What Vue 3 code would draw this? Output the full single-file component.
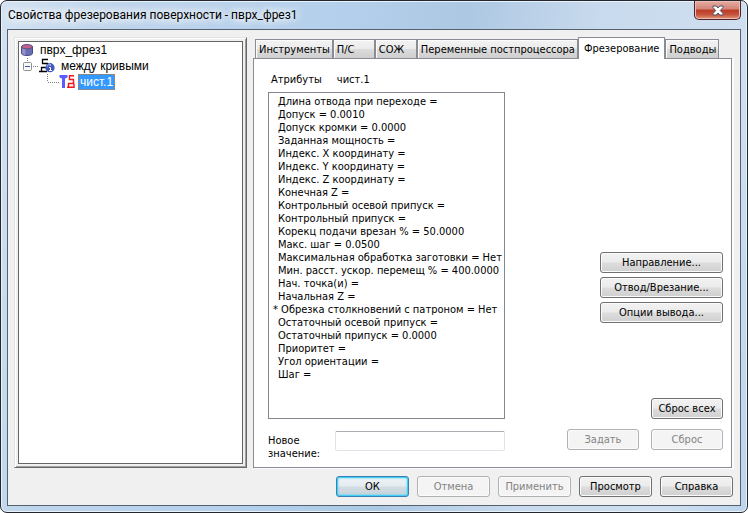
<script setup>
import { ref } from 'vue'

const tabs = ['Инструменты', 'П/С', 'СОЖ', 'Переменные постпроцессора', 'Фрезерование', 'Подводы']
const activeTab = ref('Фрезерование')
const newValue = ref('')
const attributes = [
  'Длина отвода при переходе =',
  'Допуск = 0.0010',
  'Допуск кромки = 0.0000',
  'Заданная мощность =',
  'Индекс. X координату =',
  'Индекс. Y координату =',
  'Индекс. Z координату =',
  'Конечная Z =',
  'Контрольный осевой припуск =',
  'Контрольный припуск =',
  'Корекц подачи врезан % = 50.0000',
  'Макс. шаг = 0.0500',
  'Максимальная обработка заготовки = Нет',
  'Мин. расст. ускор. перемещ % = 400.0000',
  'Нач. точка(и) =',
  'Начальная Z =',
  '* Обрезка столкновений с патроном = Нет',
  'Остаточный осевой припуск =',
  'Остаточный припуск = 0.0000',
  'Приоритет =',
  'Угол ориентации =',
  'Шаг ='
]
const footer = [
  { label: 'ОК', kind: 'primary' },
  { label: 'Отмена', disabled: true },
  { label: 'Применить', disabled: true },
  { label: 'Просмотр' },
  { label: 'Справка' }
]
</script>

<template>
  <div class="window">
    <header class="titlebar">
      <h1 class="title">Свойства фрезерования поверхности - пврх_фрез1</h1>
      <button class="close" type="button" aria-label="Закрыть">
        <svg width="12" height="11" viewBox="0 0 12 11">
          <path d="M1 1h3.200L6 3l1.800-2H11v1.500L8.300 5.500 11 8.500V10H7.800L6 8l-1.800 2H1V8.500l2.700-3L1 2.500z" fill="#fff" stroke="#4b5468" stroke-width="1" />
        </svg>
      </button>
    </header>

    <main class="client">
      <div class="content">
        <div class="tree-frame">
          <ul class="tree" role="tree">
            <li class="node" role="treeitem">
              <svg class="icon" width="14" height="14" viewBox="0 0 14 14">
                <path d="M1.500 3.500v7c0 1.200 2.500 2 5.500 2s5.500-.8 5.500-2v-7z" fill="#6c6cb0" stroke="#4a4a86" />
                <path d="M2 5v5.500c.5.700 2 1.200 3.500 1.400V6z" fill="#9090d0" />
                <ellipse cx="7" cy="3.700" rx="5.500" ry="2.200" fill="#c45f88" stroke="#54508a" />
              </svg>
              <span class="label root-label">пврх_фрез1</span>
            </li>
            <li class="node" role="treeitem">
              <svg class="icon" width="36" height="16" viewBox="0 0 36 16">
                <path d="M7.500 0v4M13 8.500h5" stroke="#808080" stroke-dasharray="1 1" fill="none" />
                <rect x="3.500" y="4.500" width="8" height="8" rx="1" fill="#f8f8f8" stroke="#919191" />
                <path d="M5 8.500h5" stroke="#3557a5" />
                <path d="M28 1.500h-5.500v4h5v4h-6v4M19 13.500h8" stroke="#000" stroke-width="1.300" fill="none" />
                <circle cx="30" cy="9.700" r="4.600" fill="#4058bd" />
                <path d="M26.800 9a3.300 3.300 0 0 1 3-2.800" stroke="#91a7e8" fill="none" />
                <path d="M29.500 7h1.500M29 9.500h1.500v3M29 12.500h3" stroke="#fff" fill="none" />
              </svg>
              <span class="label">между кривыми</span>
            </li>
            <li class="node" role="treeitem" aria-selected="true">
              <svg class="icon leaf-icon" width="28" height="16" viewBox="0 0 28 16">
                <path d="M.5 0v8M1 8.500h11" stroke="#808080" stroke-dasharray="1 1" fill="none" />
                <path d="M12.500 1h8v2.500l-2.500 1V14h-3V4.500l-2.500-1z" fill="#5b5bff" />
                <path d="M27 1.700h-4.500v3.800h4v4h-5v3.800M20 13.300h7V9.500" stroke="#f0141c" stroke-width="1.400" fill="none" />
              </svg>
              <span class="label selected">чист.1</span>
            </li>
          </ul>
        </div>

        <section class="tabs">
          <div class="tab-row" role="tablist">
            <button
              v-for="t in tabs"
              :key="t"
              type="button"
              role="tab"
              class="tab"
              :class="{ active: t === activeTab }"
              :aria-selected="t === activeTab"
              @click="activeTab = t"
            >{{ t }}</button>
          </div>
          <div class="panel" role="tabpanel">
            <div class="heading"><span>Атрибуты</span><span>чист.1</span></div>
            <div class="middle">
              <ul class="list" role="listbox" aria-label="Атрибуты">
                <li
                  v-for="a in attributes"
                  :key="a"
                  role="option"
                  class="option"
                  :class="{ starred: a.startsWith('*') }"
                >{{ a }}</li>
              </ul>
              <div class="actions">
                <button class="btn wide" type="button">Направление...</button>
                <button class="btn wide" type="button">Отвод/Врезание...</button>
                <button class="btn wide" type="button">Опции вывода...</button>
                <button class="btn reset-all" type="button">Сброс всех</button>
              </div>
            </div>
            <div class="edit">
              <label class="edit-label" for="new-value">Новое значение:</label>
              <input id="new-value" v-model="newValue" class="field" type="text" />
              <div class="edit-buttons">
                <button class="btn" type="button" disabled>Задать</button>
                <button class="btn" type="button" disabled>Сброс</button>
              </div>
            </div>
          </div>
        </section>
      </div>

      <footer class="footer">
        <button
          v-for="b in footer"
          :key="b.label"
          type="button"
          class="btn"
          :class="b.kind"
          :disabled="b.disabled"
        >{{ b.label }}</button>
      </footer>
    </main>
  </div>
</template>

<style>
body {
  margin: 0;
  background: #fff;
}
</style>

<style scoped>
* {
  box-sizing: border-box;
}
.window {
  display: flex;
  flex-direction: column;
  min-height: 100vh;
  padding: 0 6px 6px;
  border: 1px solid #23262c;
  border-radius: 7px;
  background: linear-gradient(100deg, #d3e2f1 0, #bed5ec 14%, #b5d0ec 40%, #adc8e3 56%, #c8daed 72%, #cfdff0 90%, #bcd4ec 100%);
  box-shadow: inset 0 0 0 1px #e9f3fb;
  font-family: "DejaVu Sans Condensed", "DejaVu Sans", sans-serif;
  font-size: 11px;
  line-height: 13px;
  color: #000;
}
.titlebar {
  display: flex;
  justify-content: space-between;
  align-items: flex-start;
  height: 28px;
}
.title {
  margin: 0;
  padding: 5px 1px;
  font: 12px/18px Roboto, sans-serif;
  text-shadow: 0 0 8px #fff, 0 0 8px #fff, 0 0 12px #fff;
}
.close {
  display: flex;
  justify-content: center;
  align-items: center;
  width: 47px;
  height: 19px;
  padding: 0;
  border: 1px solid #4f2229;
  border-top: 0;
  border-radius: 0 0 5px 5px;
  background: linear-gradient(#e5aca2 0, #d28478 45%, #bd3a24 50%, #c6523b 75%, #e09a7c 100%);
  box-shadow: inset 0 0 0 1px #eebcb2;
}
.client {
  flex: 1;
  display: flex;
  flex-direction: column;
  padding: 7px 7px 8px 6px;
  border: 1px solid #56616f;
  background: #f0f0f0;
}
.content {
  flex: 1;
  display: flex;
  gap: 6px;
  padding-right: 1px;
}
.tree-frame {
  flex: 0 0 233px;
  display: flex;
  padding: 2px;
  border: 1px solid;
  border-color: #e3e3e3 #696969 #696969 #e3e3e3;
  box-shadow: inset 1px 1px 0 #fff, inset -1px -1px 0 #a0a0a0;
}
.tree {
  flex: 1;
  margin: 1px;
  padding: 0 1px;
  list-style: none;
  border: 1px solid #646464;
  background: #fff;
  font: 12px/16px "Liberation Sans", Arial, sans-serif;
}
.node {
  display: flex;
  align-items: center;
  height: 16px;
}
.icon {
  flex: none;
}
.label {
  padding: 0 2px;
  margin-left: 3px;
}
.root-label {
  margin-left: 4px;
}
.leaf-icon {
  margin-left: 27px;
}
.selected {
  background: #3399ff;
  color: #fff;
  outline: 1px dotted #d07b26;
  outline-offset: -1px;
}
.tabs {
  flex: 1;
  display: flex;
  flex-direction: column;
  min-width: 0;
}
.tab-row {
  display: flex;
  align-items: flex-end;
  height: 21px;
  padding: 0 10px 0 2px;
}
.tab {
  flex: none;
  min-width: 42px;
  height: 19px;
  padding: 1px 2px 0 3px;
  border: 1px solid #898c95;
  border-bottom: 0;
  background: linear-gradient(#f3f3f3 0, #ebebeb 50%, #dcdcdc 52%, #cecece 100%);
  box-shadow: inset 1px 1px 0 #fcfcfc;
  font: inherit;
  text-align: left;
  white-space: nowrap;
  color: #000;
}
.tab.active {
  z-index: 1;
  height: 22px;
  margin-bottom: -1px;
  padding: 0 5px;
  background: #fff;
}
.panel {
  flex: 1;
  display: flex;
  flex-direction: column;
  padding: 14px 8px 7px 14px;
  border: 1px solid #898c95;
  background: #fff;
  box-shadow: 2px 1px 0 #fcfcfc;
}
.heading {
  display: flex;
  gap: 15px;
  padding: 0 3px 6px;
}
.middle {
  flex: 1;
  display: flex;
  justify-content: space-between;
}
.list {
  flex: 0 1 237px;
  margin: 0;
  padding: 2px 0 30px 9px;
  list-style: none;
  border: 1px solid #828790;
}
.option {
  white-space: nowrap;
}
.starred {
  margin-left: -5px;
}
.actions {
  flex: 0 0 123px;
  display: flex;
  flex-direction: column;
  justify-content: flex-end;
  align-items: flex-end;
  gap: 4px;
}
.btn {
  width: 72px;
  height: 21px;
  padding: 0;
  border: 1px solid #707070;
  border-radius: 3px;
  background: linear-gradient(#f2f2f2 0, #ebebeb 49%, #dddddd 51%, #cfcfcf 100%);
  box-shadow: inset 0 0 0 1px #fbfbfb;
  font: inherit;
  color: #000;
  white-space: nowrap;
}
.btn:disabled {
  border-color: #adb2b5;
  background: #f4f4f4;
  color: #838383;
}
.btn.primary {
  border-color: #3c7fb1;
  background: linear-gradient(#eef3f6 0, #e4ebef 49%, #d3dde3 51%, #c5d2da 100%);
  box-shadow: inset 0 0 0 1px #3fd0f8, inset 0 0 2px 1px #3fd0f8;
}
.btn.wide {
  width: 100%;
}
.reset-all {
  margin-top: 71px;
}
.edit {
  display: flex;
  align-items: flex-start;
  padding-top: 10px;
}
.edit-label {
  flex: 0 0 67px;
  padding-top: 5px;
}
.field {
  flex: 0 1 170px;
  min-width: 0;
  height: 20px;
  margin-top: 2px;
  padding: 0 3px;
  border: 1px solid #e2e3ea;
  border-top-color: #abadb3;
  border-radius: 2px;
  background: #fff;
  font: inherit;
}
.edit-buttons {
  display: flex;
  gap: 12px;
  margin-left: auto;
}
.footer {
  display: flex;
  justify-content: flex-end;
  gap: 8px;
  padding-top: 8px;
}
.footer .btn {
  width: 73px;
}
</style>
